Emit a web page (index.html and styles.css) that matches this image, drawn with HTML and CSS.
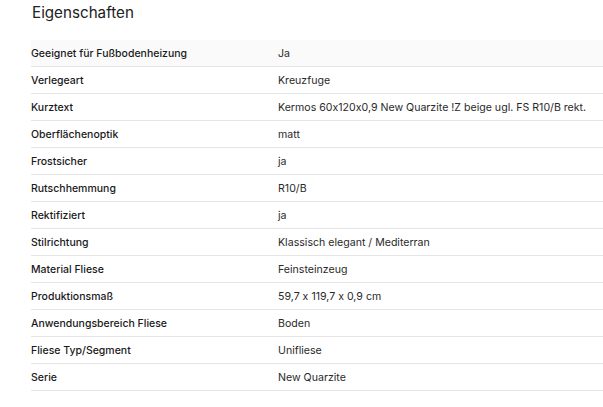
FILE: index.html
```html
<!DOCTYPE html>
<html lang="de">
<head>
<meta charset="utf-8">
<link rel="stylesheet" href="styles.css">
</head>
<body>
<section class="props">
  <h2 class="title">Eigenschaften</h2>
  <div class="table">
    <div class="row first"><div class="label">Geeignet für Fußbodenheizung</div><div class="value">Ja</div></div>
    <div class="row"><div class="label">Verlegeart</div><div class="value">Kreuzfuge</div></div>
    <div class="row"><div class="label">Kurztext</div><div class="value">Kermos 60x120x0,9 New Quarzite !Z beige ugl. FS R10/B rekt.</div></div>
    <div class="row"><div class="label">Oberflächenoptik</div><div class="value">matt</div></div>
    <div class="row"><div class="label">Frostsicher</div><div class="value">ja</div></div>
    <div class="row"><div class="label">Rutschhemmung</div><div class="value">R10/B</div></div>
    <div class="row"><div class="label">Rektifiziert</div><div class="value">ja</div></div>
    <div class="row"><div class="label">Stilrichtung</div><div class="value">Klassisch elegant / Mediterran</div></div>
    <div class="row"><div class="label">Material Fliese</div><div class="value">Feinsteinzeug</div></div>
    <div class="row"><div class="label">Produktionsmaß</div><div class="value">59,7 x 119,7 x 0,9 cm</div></div>
    <div class="row"><div class="label">Anwendungsbereich Fliese</div><div class="value">Boden</div></div>
    <div class="row"><div class="label">Fliese Typ/Segment</div><div class="value">Unifliese</div></div>
    <div class="row"><div class="label">Serie</div><div class="value">New Quarzite</div></div>
  </div>
</section>
</body>
</html>
```

FILE: styles.css
```css
html, body {
  margin: 0;
  padding: 0;
  background: #fff;
}
body {
  font-family: Inter, "Liberation Sans", Arial, sans-serif;
  font-feature-settings: "calt" 0;
  color: #222;
}
.props {
  padding-left: 31px;
}
.title {
  margin: 0;
  padding: 2px 0 0 1px;
  font-size: 15.2px;
  line-height: 22px;
  font-weight: 400;
  color: #222;
  height: 40px;
  box-sizing: border-box;
}
.table {
  display: flex;
  flex-direction: column;
}
.row {
  display: grid;
  grid-template-columns: 247px 1fr;
  height: 27px;
  box-sizing: border-box;
  border-bottom: 1px solid #e6e6e6;
  align-items: center;
  font-size: 10.5px;
}
.row.first {
  background: #fafafa;
}
.label {
  font-weight: 500;
  color: #1a1a1a;
}
.value {
  font-size: 10.6px;
  color: #2a2a2a;
}
```
